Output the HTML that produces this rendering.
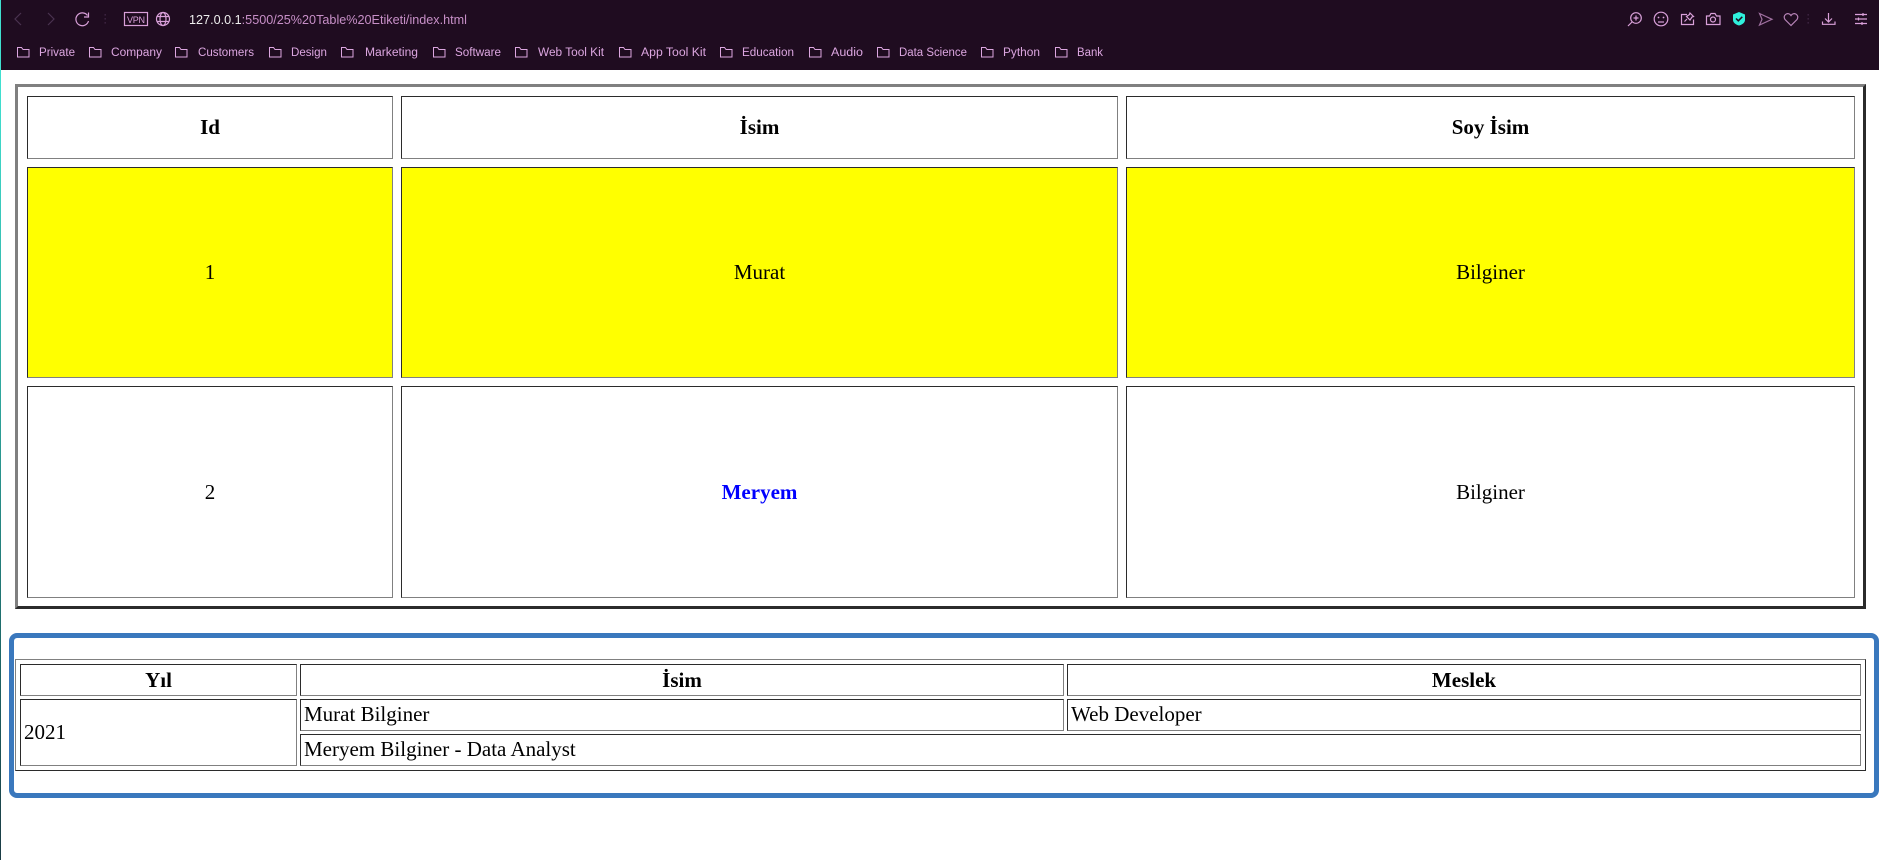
<!DOCTYPE html>
<html lang="tr">
<head>
<meta charset="utf-8">
<title>Table Etiketi</title>
<style>
html,body{margin:0;padding:0;background:#fff;width:1879px;height:860px;overflow:hidden}
body{position:relative;font-family:"Liberation Serif",serif;font-size:21px;color:#000}
#strip{position:absolute;left:0;top:0;width:1px;height:860px;background:linear-gradient(#40e0d0 0,#40e0d0 10%,#2fa89e 45%,#1f6f6e 72%,#1a3b44 100%);z-index:3}
#bar{position:absolute;left:0;top:0;display:block}
table{position:absolute;table-layout:fixed;border-collapse:separate}
th,td{border-style:solid;border-width:1px;border-color:#2b2b2b #808080 #808080 #2b2b2b;box-sizing:border-box;overflow:hidden;white-space:nowrap}
#t1{left:15px;top:84px;width:1851px;height:525px;box-sizing:border-box;border-spacing:8px;border-style:solid;border-width:3px;border-color:#808080 #2b2b2b #2b2b2b #808080;padding:1px 0 0 1px}
#t1 th,#t1 td{text-align:center;padding:0}
.y td{background:#ff0}
.m{color:#00f;font-weight:bold}
#box{position:absolute;left:9px;top:633px;width:1870px;height:165px;box-sizing:border-box;border:5px solid #3a78bd;border-radius:8px}
#t2{left:15px;top:659px;width:1851px;height:112px;box-sizing:border-box;border-spacing:3px;border-style:solid;border-width:1px;border-color:#808080 #2b2b2b #2b2b2b #808080;padding:1px}
#t2 th,#t2 td{height:32px;padding:0 3px;line-height:28px;text-align:left}
#t2 td{padding-bottom:2px}
#t2 th{text-align:center}
</style>
</head>
<body>
<div id="strip"></div>
<svg id="bar" width="1879" height="70" viewBox="0 0 1879 70" xmlns="http://www.w3.org/2000/svg">
<rect width="1879" height="70" fill="#1f0c20"/>
<g fill="none" stroke="#4a3350" stroke-width="1.2">
<path d="M21 13l-6 6 6 6"/><path d="M48 13l6 6-6 6"/>
</g>
<g fill="none" stroke="#d9a0d9" stroke-width="1.2">
<path d="M87.5 15.5A6.4 6.4 0 1 0 88.5 21"/><path d="M88.5 12.5v4.5h-4.5"/>
<rect x="124.5" y="12.5" width="23" height="13"/>
<circle cx="163" cy="19" r="6.5"/><ellipse cx="163" cy="19" rx="3" ry="6.5"/><path d="M157 16.5h12M157 21.5h12"/>
</g>
<g fill="#3d2542"><rect x="104.5" y="14" width="1.4" height="1.6"/><rect x="104.5" y="18" width="1.4" height="1.6"/><rect x="104.5" y="22" width="1.4" height="1.6"/></g>
<text x="127" y="23" font-family="Liberation Sans" font-size="9" fill="#d9a0d9" textLength="18" lengthAdjust="spacing">VPN</text>
<text x="189" y="24" font-family="Liberation Sans" font-size="13" xml:space="preserve" textLength="278" lengthAdjust="spacingAndGlyphs" fill="#c78fc7"><tspan fill="#eee">127.0.0.1</tspan>:5500/25%20Table%20Etiketi/index.html</text>

<g fill="none" stroke="#d9a0d9" stroke-width="1.2">
<circle cx="1636" cy="18" r="5.3"/><path d="M1633.5 18h5M1636 15.5v5"/><path d="M1632 22l-4 4"/>
<circle cx="1661" cy="19" r="6.8"/><path d="M1658 22h6"/>
<path d="M1687 14.500h-5.500v10h12v-5"/><path d="M1690 13l3.500 3.500-1.500.5-2 3-3.500-3.500 3-2zM1687 19l-2.500 2.500"/>
<path d="M1706.500 16h3l1.500-2.500h4l1.500 2.500h3.500v8.500h-13.500z"/><circle cx="1713" cy="19.500" r="2.500"/>
</g>
<circle cx="1663.500" cy="17.500" r=".9" fill="#d9a0d9"/><circle cx="1658.500" cy="17.500" r=".9" fill="#d9a0d9"/>
<path d="M1733 14.500l6-2.500 6 2.500v5.500c0 2.500-2.500 4.500-6 5.500-3.500-1-6-3-6-5.500z" fill="#2ff0dc"/>
<path d="M1736 18.500l2.300 2.300 4-4" fill="none" stroke="#1f0c20" stroke-width="1.5"/>
<g fill="none" stroke="#a070a0" stroke-width="1.2"><path d="M1759.500 13.500l12.500 5.800-12.500 5.700 2.500-5.700z"/></g>
<path d="M1791 25.500l-6-6c-3-4 3-8.500 6-4 3-4.500 9-0 6 4z" fill="none" stroke="#b885b8" stroke-width="1.2"/>
<g fill="#3d2542"><rect x="1807.500" y="14" width="1.400" height="1.600"/><rect x="1807.500" y="18" width="1.400" height="1.600"/><rect x="1807.500" y="22" width="1.400" height="1.600"/></g>
<g fill="none" stroke="#d9a0d9" stroke-width="1.2">
<path d="M1828.500 13v9M1825 18.500l3.500 3.500 3.500-3.500"/><path d="M1822.500 21.500v2.800h12.500v-2.800"/>
<path d="M1855 14.500h12M1855 19h12M1855 23.500h12"/><path d="M1863 13v3M1858.500 17.500v3M1862 22v3"/>
</g>
<g font-family="Liberation Sans" font-size="11.500" fill="#dca6e0">
<text x="39" y="56" textLength="36" lengthAdjust="spacingAndGlyphs">Private</text>
<text x="111" y="56" textLength="51" lengthAdjust="spacingAndGlyphs">Company</text>
<text x="198" y="56" textLength="56" lengthAdjust="spacingAndGlyphs">Customers</text>
<text x="291" y="56" textLength="36" lengthAdjust="spacingAndGlyphs">Design</text>
<text x="365" y="56" textLength="53" lengthAdjust="spacingAndGlyphs">Marketing</text>
<text x="455" y="56" textLength="46" lengthAdjust="spacingAndGlyphs">Software</text>
<text x="538" y="56" textLength="66" lengthAdjust="spacingAndGlyphs">Web Tool Kit</text>
<text x="641" y="56" textLength="65" lengthAdjust="spacingAndGlyphs">App Tool Kit</text>
<text x="742" y="56" textLength="52" lengthAdjust="spacingAndGlyphs">Education</text>
<text x="831" y="56" textLength="32" lengthAdjust="spacingAndGlyphs">Audio</text>
<text x="899" y="56" textLength="68" lengthAdjust="spacingAndGlyphs">Data Science</text>
<text x="1003" y="56" textLength="37" lengthAdjust="spacingAndGlyphs">Python</text>
<text x="1077" y="56" textLength="26" lengthAdjust="spacingAndGlyphs">Bank</text>
</g>
<g fill="none" stroke="#dca6e0" stroke-width="1">
<path id="f" d="M17.500 47.500h4l1.500 2h6v7.500h-11.500z"/>
<path d="M17.500 47.500h4l1.500 2h6v7.500h-11.500z" transform="translate(72 0)"/>
<path d="M17.500 47.500h4l1.500 2h6v7.500h-11.500z" transform="translate(158 0)"/>
<path d="M17.500 47.500h4l1.500 2h6v7.500h-11.500z" transform="translate(252 0)"/>
<path d="M17.500 47.500h4l1.500 2h6v7.500h-11.500z" transform="translate(324 0)"/>
<path d="M17.500 47.500h4l1.500 2h6v7.500h-11.500z" transform="translate(416 0)"/>
<path d="M17.500 47.500h4l1.500 2h6v7.500h-11.500z" transform="translate(498 0)"/>
<path d="M17.500 47.500h4l1.500 2h6v7.500h-11.500z" transform="translate(602 0)"/>
<path d="M17.500 47.500h4l1.500 2h6v7.500h-11.500z" transform="translate(703 0)"/>
<path d="M17.500 47.500h4l1.500 2h6v7.500h-11.500z" transform="translate(792 0)"/>
<path d="M17.500 47.500h4l1.500 2h6v7.500h-11.500z" transform="translate(860 0)"/>
<path d="M17.500 47.500h4l1.500 2h6v7.500h-11.500z" transform="translate(964 0)"/>
<path d="M17.500 47.500h4l1.500 2h6v7.500h-11.500z" transform="translate(1038 0)"/>
</g>
</svg>

<table id="t1">
<colgroup><col style="width:366px"><col style="width:717px"><col style="width:729px"></colgroup>
<tr style="height:63px"><th>Id</th><th>İsim</th><th>Soy İsim</th></tr>
<tr class="y" style="height:211px"><td>1</td><td>Murat</td><td>Bilginer</td></tr>
<tr style="height:212px"><td>2</td><td class="m">Meryem</td><td>Bilginer</td></tr>
</table>

<div id="box"></div>
<table id="t2">
<colgroup><col style="width:277px"><col style="width:764px"><col style="width:794px"></colgroup>
<tr><th>Yıl</th><th>İsim</th><th>Meslek</th></tr>
<tr><td rowspan="2">2021</td><td>Murat Bilginer</td><td>Web Developer</td></tr>
<tr><td colspan="2">Meryem Bilginer - Data Analyst</td></tr>
</table>
</body>
</html>
